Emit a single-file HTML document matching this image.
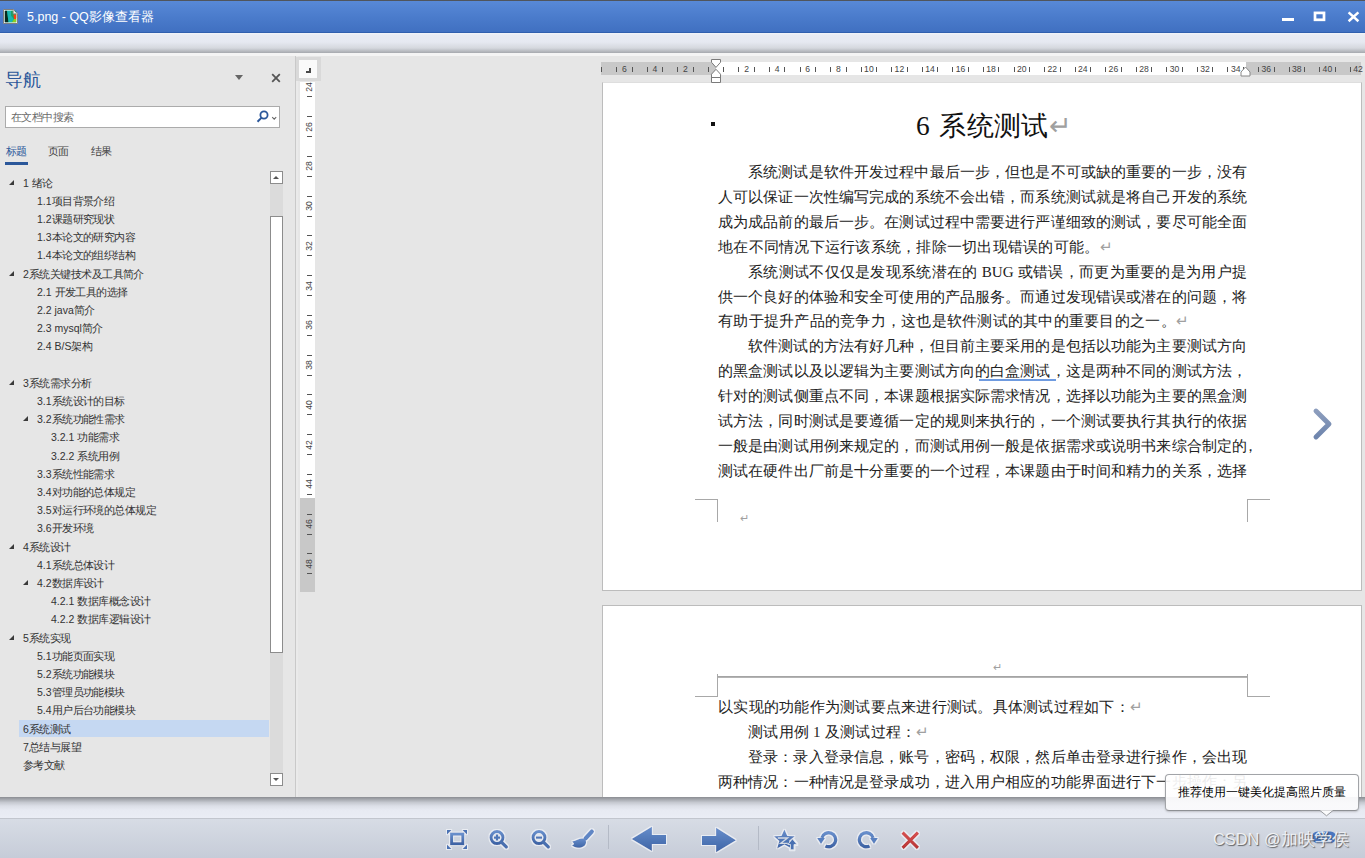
<!DOCTYPE html>
<html><head><meta charset="utf-8"><style>
*{margin:0;padding:0;box-sizing:border-box}
html,body{width:1365px;height:858px;overflow:hidden;background:#e6e6e6;font-family:"Liberation Sans",sans-serif;position:relative}
.a{position:absolute}
.ni{position:absolute;font-size:10.5px;color:#333;white-space:nowrap;line-height:14px;height:14px}
.tri{position:absolute;width:0;height:0;border-left:5.5px solid transparent;border-bottom:5px solid #3a3a3a}
.ln{position:absolute;font-family:"Liberation Serif",serif;font-size:15.1px;letter-spacing:0;color:#222;white-space:nowrap;line-height:20px;height:20px;text-align:justify;text-align-last:justify}
.rm{color:#a0a0a0}
.lf{text-align:left!important;text-align-last:left!important;letter-spacing:0.26px!important}
.cj{letter-spacing:-0.54px}
.rt{position:absolute;font-size:8.6px;color:#444;line-height:8px;white-space:nowrap}
.tk{position:absolute;background:#555}
</style></head><body>
<div class="a" style="left:0;top:0;width:1365px;height:1px;background:#50555c"></div>
<div class="a" style="left:0;top:1px;width:1365px;height:31px;background:linear-gradient(#5889d7,#4b7ccc 50%,#4070c1)"></div>
<div class="a" style="left:0;top:32px;width:1365px;height:1px;background:#2f5fae"></div>
<svg class="a" style="left:3px;top:9px" width="16" height="16" viewBox="0 0 16 16"><path d="M0.5 0.5 H10.5 L14.5 4.5 V14.5 H0.5 Z" fill="#fff" stroke="#7f7f7f"/><rect x="1.8" y="1.8" width="11.4" height="11.4" fill="#0a8a6a"/><path d="M1.8 1.8 H4 L5.5 13.2 H1.8 Z" fill="#062a1e"/><path d="M4 1.8 H8 L8.5 7 L11 10 L9 13.2 H5.5 Z" fill="#17b8b0"/><path d="M8 1.8 H10.2 L13.2 4.8 V9 L11 10 L8.5 7 Z" fill="#20a060"/><path d="M10.5 5.5 L13.2 5.5 V10.5 L11.2 10.5 Z" fill="#ff3c10"/><path d="M9 13.2 L11 10 L13.2 10 V13.2 Z" fill="#8dd020"/><path d="M10.2 0.8 V4.8 H14.2" fill="#eee" stroke="#8a8a8a" stroke-width="0.8"/></svg>
<div class="a" style="left:27px;top:9px;color:#fff;font-size:12.5px;line-height:16px;white-space:nowrap">5.png - QQ影像查看器</div>
<div class="a" style="left:1282px;top:18px;width:12px;height:3px;background:#fff"></div>
<svg class="a" style="left:1310px;top:8px" width="20" height="18" viewBox="0 0 20 18"><rect x="5" y="4.9" width="9" height="6.9" fill="none" stroke="#fff" stroke-width="2.7"/></svg>
<svg class="a" style="left:1346px;top:10px" width="15" height="13" viewBox="0 0 15 13"><path d="M2.6 2.4 L12.4 11.2 M12.4 2.4 L2.6 11.2" stroke="#fff" stroke-width="2.5"/></svg>
<div class="a" style="left:0;top:33px;width:1365px;height:20px;background:linear-gradient(#f2f4f9 0%,#e8ebf3 10%,#e6e9f1 45%,#d5d8de 75%,#a6a9ae 100%)"></div>
<div class="a" style="left:0;top:53px;width:1365px;height:3px;background:#f4f4f4"></div>
<div class="a" style="left:5px;top:69px;font-size:18px;line-height:22px;color:#2b579a;white-space:nowrap">导航</div>
<div class="a" style="left:235px;top:75px;width:0;height:0;border-left:4px solid transparent;border-right:4px solid transparent;border-top:5px solid #666"></div>
<svg class="a" style="left:271px;top:73px" width="10" height="10" viewBox="0 0 10 10"><path d="M1.2 1.2 L8.8 8.8 M8.8 1.2 L1.2 8.8" stroke="#555" stroke-width="1.8"/></svg>
<div class="a" style="left:5px;top:106px;width:275px;height:22px;background:#fff;border:1px solid #ababab"></div>
<div class="a" style="left:11px;top:110px;font-size:10.5px;letter-spacing:-0.54px;line-height:14px;color:#6a6a6a;white-space:nowrap">在文档中搜索</div>
<svg class="a" style="left:255px;top:109px" width="22" height="16" viewBox="0 0 22 16"><circle cx="9" cy="6" r="3.6" fill="none" stroke="#2b579a" stroke-width="1.8"/><path d="M6.6 8.6 L2.5 12.8" stroke="#2b579a" stroke-width="2"/><path d="M17.2 8.2 L19.2 10.2 L21.2 8.2" fill="none" stroke="#666" stroke-width="1.1"/></svg>
<div class="a" style="left:6px;top:143.5px;font-size:10.5px;letter-spacing:-0.54px;line-height:14px;color:#2b579a;white-space:nowrap">标题</div>
<div class="a" style="left:48px;top:143.5px;font-size:10.5px;letter-spacing:-0.54px;line-height:14px;color:#444;white-space:nowrap">页面</div>
<div class="a" style="left:91px;top:143.5px;font-size:10.5px;letter-spacing:-0.54px;line-height:14px;color:#444;white-space:nowrap">结果</div>
<div class="a" style="left:5px;top:162px;width:23px;height:3px;background:#2b579a"></div>
<div class="ni" style="left:23px;top:175.5px">1 <span class="cj">绪论</span></div>
<div class="tri" style="left:9px;top:179.8px"></div>
<div class="ni" style="left:37px;top:193.7px">1.1<span class="cj">项目背景介绍</span></div>
<div class="ni" style="left:37px;top:211.9px">1.2<span class="cj">课题研究现状</span></div>
<div class="ni" style="left:37px;top:230.1px">1.3<span class="cj">本论文的研究内容</span></div>
<div class="ni" style="left:37px;top:248.3px">1.4<span class="cj">本论文的组织结构</span></div>
<div class="ni" style="left:23px;top:266.5px">2<span class="cj">系统关键技术及工具简介</span></div>
<div class="tri" style="left:9px;top:270.8px"></div>
<div class="ni" style="left:37px;top:284.7px">2.1 <span class="cj">开发工具的选择</span></div>
<div class="ni" style="left:37px;top:302.9px">2.2 java<span class="cj">简介</span></div>
<div class="ni" style="left:37px;top:321.1px">2.3 mysql<span class="cj">简介</span></div>
<div class="ni" style="left:37px;top:339.3px">2.4 B/S<span class="cj">架构</span></div>
<div class="ni" style="left:23px;top:375.7px">3<span class="cj">系统需求分析</span></div>
<div class="tri" style="left:9px;top:380.0px"></div>
<div class="ni" style="left:37px;top:393.9px">3.1<span class="cj">系统设计的目标</span></div>
<div class="ni" style="left:37px;top:412.1px">3.2<span class="cj">系统功能性需求</span></div>
<div class="tri" style="left:23px;top:416.4px"></div>
<div class="ni" style="left:51px;top:430.3px">3.2.1 <span class="cj">功能需求</span></div>
<div class="ni" style="left:51px;top:448.5px">3.2.2 <span class="cj">系统用例</span></div>
<div class="ni" style="left:37px;top:466.7px">3.3<span class="cj">系统性能需求</span></div>
<div class="ni" style="left:37px;top:484.9px">3.4<span class="cj">对功能的总体规定</span></div>
<div class="ni" style="left:37px;top:503.1px">3.5<span class="cj">对运行环境的总体规定</span></div>
<div class="ni" style="left:37px;top:521.3px">3.6<span class="cj">开发环境</span></div>
<div class="ni" style="left:23px;top:539.5px">4<span class="cj">系统设计</span></div>
<div class="tri" style="left:9px;top:543.8px"></div>
<div class="ni" style="left:37px;top:557.7px">4.1<span class="cj">系统总体设计</span></div>
<div class="ni" style="left:37px;top:575.9px">4.2<span class="cj">数据库设计</span></div>
<div class="tri" style="left:23px;top:580.2px"></div>
<div class="ni" style="left:51px;top:594.1px">4.2.1 <span class="cj">数据库概念设计</span></div>
<div class="ni" style="left:51px;top:612.3px">4.2.2 <span class="cj">数据库逻辑设计</span></div>
<div class="ni" style="left:23px;top:630.5px">5<span class="cj">系统实现</span></div>
<div class="tri" style="left:9px;top:634.8px"></div>
<div class="ni" style="left:37px;top:648.7px">5.1<span class="cj">功能页面实现</span></div>
<div class="ni" style="left:37px;top:666.9px">5.2<span class="cj">系统功能模块</span></div>
<div class="ni" style="left:37px;top:685.1px">5.3<span class="cj">管理员功能模块</span></div>
<div class="ni" style="left:37px;top:703.3px">5.4<span class="cj">用户后台功能模块</span></div>
<div class="a" style="left:19px;top:720px;width:250px;height:17px;background:#c5d8f2"></div>
<div class="ni" style="left:23px;top:721.5px">6<span class="cj">系统测试</span></div>
<div class="ni" style="left:23px;top:739.7px">7<span class="cj">总结与展望</span></div>
<div class="ni" style="left:23px;top:757.9px"><span class="cj">参考文献</span></div>
<div class="a" style="left:270px;top:184px;width:13px;height:589px;background:#dbdbdb"></div>
<div class="a" style="left:270px;top:171px;width:13px;height:13px;background:#fff;border:1px solid #8c8c8c"></div>
<div class="a" style="left:273px;top:176px;width:0;height:0;border-left:3.5px solid transparent;border-right:3.5px solid transparent;border-bottom:3.5px solid #555"></div>
<div class="a" style="left:270px;top:216px;width:13px;height:437px;background:#fff;border:1px solid #8c8c8c"></div>
<div class="a" style="left:270px;top:773px;width:13px;height:13px;background:#fff;border:1px solid #8c8c8c"></div>
<div class="a" style="left:273px;top:778px;width:0;height:0;border-left:3.5px solid transparent;border-right:3.5px solid transparent;border-top:3.5px solid #555"></div>
<div class="a" style="left:295px;top:56px;width:1px;height:741px;background:#c9c9c9"></div>
<div class="a" style="left:296px;top:56px;width:2px;height:741px;background:#eaeaea"></div>
<div class="a" style="left:296px;top:57px;width:25px;height:24px;background:#d9d9d9"></div>
<div class="a" style="left:299px;top:60px;width:18px;height:18px;background:#fafafa"></div>
<div class="a" style="left:309px;top:67.5px;width:2px;height:5.5px;background:#4a4a4a"></div>
<div class="a" style="left:306px;top:71px;width:5px;height:2px;background:#4a4a4a"></div>
<div class="a" style="left:300px;top:82px;width:15px;height:416px;background:#fff"></div>
<div class="a" style="left:300px;top:498px;width:15px;height:94px;background:#c8c8c8"></div>
<div class="rt" style="left:300.5px;top:82.8px;width:16px;text-align:center;transform:rotate(-90deg)">24</div>
<div class="tk" style="left:307px;top:96.3px;width:5px;height:1px"></div>
<div class="rt" style="left:300.5px;top:122.56px;width:16px;text-align:center;transform:rotate(-90deg)">26</div>
<div class="tk" style="left:307px;top:116.1px;width:5px;height:1px"></div>
<div class="tk" style="left:307px;top:136.1px;width:5px;height:1px"></div>
<div class="rt" style="left:300.5px;top:162.32px;width:16px;text-align:center;transform:rotate(-90deg)">28</div>
<div class="tk" style="left:307px;top:155.8px;width:5px;height:1px"></div>
<div class="tk" style="left:307px;top:175.8px;width:5px;height:1px"></div>
<div class="rt" style="left:300.5px;top:202.07999999999998px;width:16px;text-align:center;transform:rotate(-90deg)">30</div>
<div class="tk" style="left:307px;top:195.6px;width:5px;height:1px"></div>
<div class="tk" style="left:307px;top:215.6px;width:5px;height:1px"></div>
<div class="rt" style="left:300.5px;top:241.83999999999997px;width:16px;text-align:center;transform:rotate(-90deg)">32</div>
<div class="tk" style="left:307px;top:235.3px;width:5px;height:1px"></div>
<div class="tk" style="left:307px;top:255.3px;width:5px;height:1px"></div>
<div class="rt" style="left:300.5px;top:281.59999999999997px;width:16px;text-align:center;transform:rotate(-90deg)">34</div>
<div class="tk" style="left:307px;top:275.1px;width:5px;height:1px"></div>
<div class="tk" style="left:307px;top:295.1px;width:5px;height:1px"></div>
<div class="rt" style="left:300.5px;top:321.36px;width:16px;text-align:center;transform:rotate(-90deg)">36</div>
<div class="tk" style="left:307px;top:314.9px;width:5px;height:1px"></div>
<div class="tk" style="left:307px;top:334.9px;width:5px;height:1px"></div>
<div class="rt" style="left:300.5px;top:361.12px;width:16px;text-align:center;transform:rotate(-90deg)">38</div>
<div class="tk" style="left:307px;top:354.6px;width:5px;height:1px"></div>
<div class="tk" style="left:307px;top:374.6px;width:5px;height:1px"></div>
<div class="rt" style="left:300.5px;top:400.88px;width:16px;text-align:center;transform:rotate(-90deg)">40</div>
<div class="tk" style="left:307px;top:394.4px;width:5px;height:1px"></div>
<div class="tk" style="left:307px;top:414.4px;width:5px;height:1px"></div>
<div class="rt" style="left:300.5px;top:440.64px;width:16px;text-align:center;transform:rotate(-90deg)">42</div>
<div class="tk" style="left:307px;top:434.1px;width:5px;height:1px"></div>
<div class="tk" style="left:307px;top:454.1px;width:5px;height:1px"></div>
<div class="rt" style="left:300.5px;top:480.4px;width:16px;text-align:center;transform:rotate(-90deg)">44</div>
<div class="tk" style="left:307px;top:473.9px;width:5px;height:1px"></div>
<div class="tk" style="left:307px;top:493.9px;width:5px;height:1px"></div>
<div class="rt" style="left:300.5px;top:520.16px;width:16px;text-align:center;transform:rotate(-90deg)">46</div>
<div class="tk" style="left:307px;top:513.7px;width:5px;height:1px"></div>
<div class="tk" style="left:307px;top:533.7px;width:5px;height:1px"></div>
<div class="rt" style="left:300.5px;top:559.92px;width:16px;text-align:center;transform:rotate(-90deg)">48</div>
<div class="tk" style="left:307px;top:553.4px;width:5px;height:1px"></div>
<div class="tk" style="left:307px;top:573.4px;width:5px;height:1px"></div>
<div class="a" style="left:602px;top:82px;width:760px;height:509px;background:#fff;border:1px solid #bcbcbc;border-top-color:#dedede"></div>
<div class="a" style="left:602px;top:605px;width:760px;height:200px;background:#fff;border:1px solid #bcbcbc"></div>
<div class="a" style="left:601px;top:62px;width:760px;height:13px;background:#c8c8c8"></div>
<div class="a" style="left:716px;top:62px;width:530px;height:13px;background:#fff"></div>
<div class="tk" style="left:601.0px;top:66.6px;width:1px;height:5px"></div>
<div class="rt" style="left:614.3px;top:64.6px;width:20px;text-align:center">6</div>
<div class="tk" style="left:616.0px;top:66.6px;width:1px;height:5px"></div>
<div class="tk" style="left:631.5px;top:66.6px;width:1px;height:5px"></div>
<div class="rt" style="left:644.9px;top:64.6px;width:20px;text-align:center">4</div>
<div class="tk" style="left:646.6px;top:66.6px;width:1px;height:5px"></div>
<div class="tk" style="left:662.1px;top:66.6px;width:1px;height:5px"></div>
<div class="rt" style="left:675.4px;top:64.6px;width:20px;text-align:center">2</div>
<div class="tk" style="left:677.2px;top:66.6px;width:1px;height:5px"></div>
<div class="tk" style="left:692.7px;top:66.6px;width:1px;height:5px"></div>
<div class="tk" style="left:707.8px;top:66.6px;width:1px;height:5px"></div>
<div class="tk" style="left:723.2px;top:66.6px;width:1px;height:5px"></div>
<div class="rt" style="left:736.6px;top:64.6px;width:20px;text-align:center">2</div>
<div class="tk" style="left:738.3px;top:66.6px;width:1px;height:5px"></div>
<div class="tk" style="left:753.8px;top:66.6px;width:1px;height:5px"></div>
<div class="rt" style="left:767.1px;top:64.6px;width:20px;text-align:center">4</div>
<div class="tk" style="left:768.9px;top:66.6px;width:1px;height:5px"></div>
<div class="tk" style="left:784.4px;top:66.6px;width:1px;height:5px"></div>
<div class="rt" style="left:797.7px;top:64.6px;width:20px;text-align:center">6</div>
<div class="tk" style="left:799.5px;top:66.6px;width:1px;height:5px"></div>
<div class="tk" style="left:815.0px;top:66.6px;width:1px;height:5px"></div>
<div class="rt" style="left:828.3px;top:64.6px;width:20px;text-align:center">8</div>
<div class="tk" style="left:830.0px;top:66.6px;width:1px;height:5px"></div>
<div class="tk" style="left:845.5px;top:66.6px;width:1px;height:5px"></div>
<div class="rt" style="left:858.9px;top:64.6px;width:20px;text-align:center">10</div>
<div class="tk" style="left:860.6px;top:66.6px;width:1px;height:5px"></div>
<div class="tk" style="left:876.1px;top:66.6px;width:1px;height:5px"></div>
<div class="rt" style="left:889.4px;top:64.6px;width:20px;text-align:center">12</div>
<div class="tk" style="left:891.2px;top:66.6px;width:1px;height:5px"></div>
<div class="tk" style="left:906.7px;top:66.6px;width:1px;height:5px"></div>
<div class="rt" style="left:920.0px;top:64.6px;width:20px;text-align:center">14</div>
<div class="tk" style="left:921.7px;top:66.6px;width:1px;height:5px"></div>
<div class="tk" style="left:937.2px;top:66.6px;width:1px;height:5px"></div>
<div class="rt" style="left:950.6px;top:64.6px;width:20px;text-align:center">16</div>
<div class="tk" style="left:952.3px;top:66.6px;width:1px;height:5px"></div>
<div class="tk" style="left:967.8px;top:66.6px;width:1px;height:5px"></div>
<div class="rt" style="left:981.1px;top:64.6px;width:20px;text-align:center">18</div>
<div class="tk" style="left:982.9px;top:66.6px;width:1px;height:5px"></div>
<div class="tk" style="left:998.4px;top:66.6px;width:1px;height:5px"></div>
<div class="rt" style="left:1011.7px;top:64.6px;width:20px;text-align:center">20</div>
<div class="tk" style="left:1013.5px;top:66.6px;width:1px;height:5px"></div>
<div class="tk" style="left:1029.0px;top:66.6px;width:1px;height:5px"></div>
<div class="rt" style="left:1042.3px;top:64.6px;width:20px;text-align:center">22</div>
<div class="tk" style="left:1044.0px;top:66.6px;width:1px;height:5px"></div>
<div class="tk" style="left:1059.5px;top:66.6px;width:1px;height:5px"></div>
<div class="rt" style="left:1072.8px;top:64.6px;width:20px;text-align:center">24</div>
<div class="tk" style="left:1074.6px;top:66.6px;width:1px;height:5px"></div>
<div class="tk" style="left:1090.1px;top:66.6px;width:1px;height:5px"></div>
<div class="rt" style="left:1103.4px;top:64.6px;width:20px;text-align:center">26</div>
<div class="tk" style="left:1105.2px;top:66.6px;width:1px;height:5px"></div>
<div class="tk" style="left:1120.7px;top:66.6px;width:1px;height:5px"></div>
<div class="rt" style="left:1134.0px;top:64.6px;width:20px;text-align:center">28</div>
<div class="tk" style="left:1135.7px;top:66.6px;width:1px;height:5px"></div>
<div class="tk" style="left:1151.2px;top:66.6px;width:1px;height:5px"></div>
<div class="rt" style="left:1164.5px;top:64.6px;width:20px;text-align:center">30</div>
<div class="tk" style="left:1166.3px;top:66.6px;width:1px;height:5px"></div>
<div class="tk" style="left:1181.8px;top:66.6px;width:1px;height:5px"></div>
<div class="rt" style="left:1195.1px;top:64.6px;width:20px;text-align:center">32</div>
<div class="tk" style="left:1196.9px;top:66.6px;width:1px;height:5px"></div>
<div class="tk" style="left:1212.4px;top:66.6px;width:1px;height:5px"></div>
<div class="rt" style="left:1225.7px;top:64.6px;width:20px;text-align:center">34</div>
<div class="tk" style="left:1227.4px;top:66.6px;width:1px;height:5px"></div>
<div class="tk" style="left:1242.9px;top:66.6px;width:1px;height:5px"></div>
<div class="rt" style="left:1256.3px;top:64.6px;width:20px;text-align:center">36</div>
<div class="tk" style="left:1258.0px;top:66.6px;width:1px;height:5px"></div>
<div class="tk" style="left:1273.5px;top:66.6px;width:1px;height:5px"></div>
<div class="rt" style="left:1286.8px;top:64.6px;width:20px;text-align:center">38</div>
<div class="tk" style="left:1288.6px;top:66.6px;width:1px;height:5px"></div>
<div class="tk" style="left:1304.1px;top:66.6px;width:1px;height:5px"></div>
<div class="rt" style="left:1317.4px;top:64.6px;width:20px;text-align:center">40</div>
<div class="tk" style="left:1319.2px;top:66.6px;width:1px;height:5px"></div>
<div class="tk" style="left:1334.7px;top:66.6px;width:1px;height:5px"></div>
<div class="rt" style="left:1348.0px;top:64.6px;width:20px;text-align:center">42</div>
<div class="tk" style="left:1349.7px;top:66.6px;width:1px;height:5px"></div>
<svg class="a" style="left:710px;top:59px" width="13" height="25" viewBox="0 0 13 25"><path d="M1.5 0.5 H10.5 V3.3 L6 8.4 L1.5 3.3 Z" fill="#fff" stroke="#7a7a7a" stroke-linejoin="miter"/><path d="M6 10.3 L10.5 15.2 V23.5 H1.5 V15.2 Z" fill="#fff" stroke="#7a7a7a" stroke-linejoin="miter"/><path d="M1.5 18.5 H10.5" stroke="#7a7a7a"/></svg>
<svg class="a" style="left:1239px;top:66px" width="13" height="11" viewBox="0 0 13 11"><path d="M6.5 1 L11 6 V10 H2 V6 Z" fill="#fff" stroke="#888"/></svg>
<div class="a" style="left:711px;top:122px;width:4px;height:4px;background:#111"></div>
<div class="a" style="left:916px;top:111px;font-family:'Liberation Serif',serif;font-size:27.4px;letter-spacing:0.3px;line-height:30px;color:#111;white-space:nowrap">6<span style="letter-spacing:2.5px"> </span>系统测试<span class="rm">↵</span></div>
<div class="ln" style="left:748px;top:161.9px;width:499px">系统测试是软件开发过程中最后一步，但也是不可或缺的重要的一步，没有</div>
<div class="ln" style="left:718px;top:186.8px;width:529px">人可以保证一次性编写完成的系统不会出错，而系统测试就是将自己开发的系统</div>
<div class="ln" style="left:718px;top:211.7px;width:529px">成为成品前的最后一步。在测试过程中需要进行严谨细致的测试，要尽可能全面</div>
<div class="ln lf" style="left:718px;top:236.7px">地在不同情况下运行该系统，排除一切出现错误的可能。<span class="rm">↵</span></div>
<div class="ln" style="left:748px;top:261.6px;width:499px">系统测试不仅仅是发现系统潜在的 BUG 或错误，而更为重要的是为用户提</div>
<div class="ln" style="left:718px;top:286.5px;width:529px">供一个良好的体验和安全可使用的产品服务。而通过发现错误或潜在的问题，将</div>
<div class="ln lf" style="left:718px;top:311.4px">有助于提升产品的竞争力，这也是软件测试的其中的重要目的之一。<span class="rm">↵</span></div>
<div class="ln" style="left:748px;top:336.3px;width:499px">软件测试的方法有好几种，但目前主要采用的是包括以功能为主要测试方向</div>
<div class="ln" style="left:718px;top:361.3px;width:529px">的黑盒测试以及以逻辑为主要测试方向的白盒测试，这是两种不同的测试方法，</div>
<div class="ln" style="left:718px;top:386.2px;width:529px">针对的测试侧重点不同，本课题根据实际需求情况，选择以功能为主要的黑盒测</div>
<div class="ln" style="left:718px;top:411.1px;width:529px">试方法，同时测试是要遵循一定的规则来执行的，一个测试要执行其执行的依据</div>
<div class="ln" style="left:718px;top:436.0px;width:529px">一般是由测试用例来规定的，而测试用例一般是依据需求或说明书来综合制定的</div>
<div class="ln" style="left:1243px;top:436.0px">，</div>
<div class="ln" style="left:718px;top:460.9px;width:529px">测试在硬件出厂前是十分重要的一个过程，本课题由于时间和精力的关系，选择</div>
<div class="a" style="left:979px;top:379px;width:77px;height:2px;background:#6f9be0"></div>
<div class="a" style="left:695px;top:499px;width:23px;height:1px;background:#a8a8a8"></div>
<div class="a" style="left:717px;top:499px;width:1px;height:23px;background:#a8a8a8"></div>
<div class="a" style="left:1247px;top:499px;width:23px;height:1px;background:#a8a8a8"></div>
<div class="a" style="left:1247px;top:499px;width:1px;height:23px;background:#a8a8a8"></div>
<div class="a rm" style="left:740px;top:510.5px;font-size:11px;line-height:14px">↵</div>
<div class="a rm" style="left:993px;top:659.5px;font-size:11px;line-height:14px">↵</div>
<div class="a" style="left:717px;top:676px;width:531px;height:1px;background:#a4a4a4"></div><div class="a" style="left:717px;top:677px;width:531px;height:1px;background:#b4b4b4"></div>
<div class="a" style="left:717px;top:674px;width:1px;height:23px;background:#a8a8a8"></div>
<div class="a" style="left:695px;top:696px;width:23px;height:1px;background:#a8a8a8"></div>
<div class="a" style="left:1247px;top:674px;width:1px;height:23px;background:#a8a8a8"></div>
<div class="a" style="left:1247px;top:696px;width:23px;height:1px;background:#a8a8a8"></div>
<div class="ln lf" style="left:718px;top:696.7px">以实现的功能作为测试要点来进行测试。具体测试过程如下：<span class="rm">↵</span></div>
<div class="ln lf" style="left:748px;top:721.6px">测试用例 1 及测试过程：<span class="rm">↵</span></div>
<div class="ln" style="left:748px;top:746.5px;width:499px">登录：录入登录信息，账号，密码，权限，然后单击登录进行操作，会出现</div>
<div class="ln" style="left:718px;top:771.5px;width:529px">两种情况：一种情况是登录成功，进入用户相应的功能界面进行下一步操作；另</div>
<svg class="a" style="left:1309px;top:406px" width="28" height="36" viewBox="0 0 28 36"><defs><linearGradient id="gc" x1="0" y1="0" x2="0" y2="1"><stop offset="0" stop-color="#8c9dbd"/><stop offset="1" stop-color="#6e85ad"/></linearGradient></defs><path d="M7 5 L20 18 L7 31" fill="none" stroke="url(#gc)" stroke-width="4.9" stroke-linecap="round" stroke-linejoin="round"/></svg>
<div class="a" style="left:0;top:797px;width:1365px;height:21px;background:linear-gradient(#8b8d92 0px,#a6a9af 2.5px,#c6c9d0 5.5px,#dcdfe7 9px,#e7eaf2 13px,#eaedf5 100%)"></div>
<div class="a" style="left:0;top:818px;width:1365px;height:1px;background:#c2c6ce"></div>
<div class="a" style="left:0;top:819px;width:1365px;height:39px;background:linear-gradient(#d7dce5,#c6ccd8)"></div>
<svg class="a" style="left:0;top:0" width="0" height="0"><defs><linearGradient id="gb" x1="0" y1="0" x2="0" y2="1"><stop offset="0" stop-color="#678ecb"/><stop offset="1" stop-color="#3e64a6"/></linearGradient><linearGradient id="gr" x1="0" y1="0" x2="0" y2="1"><stop offset="0" stop-color="#d65050"/><stop offset="1" stop-color="#b83636"/></linearGradient><filter id="hl" x="-20%" y="-20%" width="140%" height="140%"><feMorphology in="SourceAlpha" operator="dilate" radius="0.7" result="d"/><feFlood flood-color="#eef1f6" flood-opacity="0.85"/><feComposite in2="d" operator="in" result="w"/><feMerge><feMergeNode in="w"/><feMergeNode in="SourceGraphic"/></feMerge></filter></defs></svg>
<svg class="a" style="left:446px;top:829px" width="22" height="22" viewBox="0 0 22 22"><g filter="url(#hl)" transform="translate(1 1)"><path d="M0 0 H4.5 L0 4.5 Z M20 0 H15.5 L20 4.5 Z M0 19 H4.5 L0 14.5 Z M20 19 H15.5 L20 14.5 Z" fill="#4a72b4"/><rect x="4.6" y="4.1" width="11.2" height="9.6" fill="none" stroke="url(#gb)" stroke-width="3"/></g></svg>
<svg class="a" style="left:488px;top:829px" width="22" height="22" viewBox="0 0 22 22"><g filter="url(#hl)"><circle cx="9" cy="8.6" r="6" fill="#e4e8ef" fill-opacity="0.5" stroke="url(#gb)" stroke-width="3"/><path d="M13.3 13 L18.4 18" stroke="#4a70b0" stroke-width="3.2" stroke-linecap="round"/><path d="M9 5.6 V11.6 M6 8.6 H12" stroke="#4f77b8" stroke-width="2.2"/></g></svg>
<svg class="a" style="left:530px;top:829px" width="22" height="22" viewBox="0 0 22 22"><g filter="url(#hl)"><circle cx="9" cy="8.6" r="6" fill="#e4e8ef" fill-opacity="0.5" stroke="url(#gb)" stroke-width="3"/><path d="M13.3 13 L18.4 18" stroke="#4a70b0" stroke-width="3.2" stroke-linecap="round"/><path d="M6 8.6 H12" stroke="#4f77b8" stroke-width="2.2"/></g></svg>
<svg class="a" style="left:568px;top:826px" width="30" height="26" viewBox="0 0 30 26"><g filter="url(#hl)"><path d="M23.8 5.6 L17.6 12.4" stroke="#5f86c5" stroke-width="4.2" stroke-linecap="round"/><path d="M14 12.6 C16.6 12.6 18.6 14.6 17.9 17.2 C17.1 20.2 13.6 22 10 21.7 C7.6 21.5 5.6 20.6 4 19.5 L6.2 17.9 L4.2 15.2 C6.6 15.5 8.2 14.2 10 13.5 C11.3 12.9 12.6 12.6 14 12.6 Z" fill="url(#gb)"/></g></svg>
<div class="a" style="left:608px;top:825px;width:1px;height:24px;background:#b4bac6"></div>
<svg class="a" style="left:630px;top:825px" width="38" height="28" viewBox="0 0 38 28"><g filter="url(#hl)" transform="translate(1 1)"><path d="M0.7 13.1 L20.9 0.8 V9 H35 V18 H20.9 V25 Z" fill="url(#gb)"/></g></svg>
<svg class="a" style="left:700px;top:826px" width="38" height="28" viewBox="0 0 38 28"><g filter="url(#hl)" transform="translate(1 1)"><path d="M34.9 13.2 L15.1 0.7 V9.1 H1 V18 H15.1 V25.3 Z" fill="url(#gb)"/></g></svg>
<div class="a" style="left:758px;top:826px;width:1px;height:24px;background:#b4bac6"></div>
<svg class="a" style="left:772px;top:827px" width="28" height="25" viewBox="0 0 28 25"><g filter="url(#hl)"><path d="M12.4 2.6 L15.3 8.9 L22.7 9.3 L17.2 13.8 L18.8 21 L12.4 17.6 L5.1 21.6 L7.3 14 L2 9.3 L9.5 8.9 Z" fill="url(#gb)"/><path d="M5.8 11 H15.6 L8.6 16.4 H15.8" fill="none" stroke="#d3d9e3" stroke-width="1.3"/><path d="M20.4 11.8 L25 17.5 H22 V22.8 H18.4 V17.5 H15.8 Z" fill="#4a71b2" stroke="#dfe3ea" stroke-width="0.9"/></g></svg>
<svg class="a" style="left:814px;top:828px" width="26" height="24" viewBox="0 0 26 24"><g filter="url(#hl)"><path d="M7.9 9.9 A7 7 0 1 1 11.4 17.9" fill="none" stroke="url(#gb)" stroke-width="3.4"/><path d="M3.1 10.1 L11 10.1 L7 15.9 Z" fill="#5880c0"/></g></svg>
<svg class="a" style="left:855px;top:828px" width="26" height="24" viewBox="0 0 26 24"><g filter="url(#hl)" transform="translate(26 0) scale(-1 1)"><path d="M7.9 9.9 A7 7 0 1 1 11.4 17.9" fill="none" stroke="url(#gb)" stroke-width="3.4"/><path d="M3.1 10.1 L11 10.1 L7 15.9 Z" fill="#5880c0"/></g></svg>
<svg class="a" style="left:899px;top:829px" width="23" height="23" viewBox="0 0 23 23"><g filter="url(#hl)"><path d="M3.5 3.5 L19 19 M19 3.5 L3.5 19" stroke="url(#gr)" stroke-width="3.2" stroke-linecap="butt"/></g></svg>
<div class="a" style="left:1165px;top:774px;width:194px;height:37px;background:linear-gradient(rgba(255,255,255,.9) 0%,rgba(255,255,255,.93) 40%,rgba(250,250,252,.95) 100%);border:1px solid #a2a4a8;border-bottom-color:#8e9094;border-radius:4px;box-shadow:0 1px 2px rgba(0,0,0,.18)"></div>
<svg class="a" style="left:1319px;top:810px" width="15" height="7" viewBox="0 0 15 7"><path d="M1 0.5 L7.5 5.8 L14 0.5" fill="#fbfbfc" stroke="#9a9ca0"/><rect x="1.6" y="-1" width="11.8" height="1.4" fill="#fbfbfc"/></svg>
<div class="a" style="left:1178px;top:785px;font-size:12px;line-height:14px;color:#000;white-space:nowrap">推荐使用一键美化提高照片质量</div>
<svg class="a" style="left:1311px;top:830px" width="26" height="14" viewBox="0 0 26 14"><rect x="1" y="1.5" width="24" height="11.5" rx="5.5" fill="#4a76bf"/><path d="M4 6 C6 2 11 1 14 3" fill="none" stroke="#cfe0f6" stroke-width="1.3"/><text x="9" y="11" font-family="Liberation Sans" font-size="9" font-weight="bold" fill="#dbe6f5">Q2</text></svg>
<div class="a" style="left:1213px;top:828px;font-size:16.4px;line-height:22px;color:rgba(246,247,249,.92);white-space:nowrap;text-shadow:1px 1px 1px rgba(60,60,60,.75)">CSDN @<span style="font-size:17px">加映学侯</span></div>
</body></html>
